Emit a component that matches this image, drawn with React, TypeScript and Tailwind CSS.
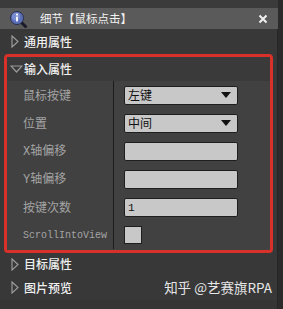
import React from "react"

const cjk = { fontFamily: '"Noto Sans CJK SC", "Noto Sans", sans-serif' }
const mono = { fontFamily: '"Liberation Mono", "Noto Sans CJK SC", monospace' }

function RightTri() {
  return (
    <svg width="8" height="13" viewBox="0 0 8 13" className="shrink-0">
      <polygon points="1,1 7,6.5 1,12" fill="none" stroke="#9a9a9a" strokeWidth="1.2" />
    </svg>
  )
}

function DownTri() {
  return (
    <svg width="13" height="8" viewBox="0 0 13 8" className="shrink-0">
      <polygon points="1,1 12,1 6.5,7" fill="none" stroke="#9a9a9a" strokeWidth="1.2" />
    </svg>
  )
}

function InfoIcon() {
  return (
    <svg width="18" height="18" viewBox="0 0 18 18">
      <line x1="11" y1="11" x2="16.5" y2="16.5" stroke="#1a1a2a" strokeWidth="3" strokeLinecap="round" />
      <circle cx="8" cy="8" r="6.5" fill="#5b6fb8" stroke="#2a3050" strokeWidth="1" />
      <circle cx="7" cy="6.5" r="4" fill="#8fa0e0" opacity="0.6" />
      <circle cx="8" cy="4.6" r="1.1" fill="#fff" />
      <rect x="7.1" y="6.6" width="1.8" height="4.8" fill="#fff" />
    </svg>
  )
}

const rows: { label: string; mono?: boolean; kind: "select" | "text" | "check"; value?: string }[] = [
  { label: "鼠标按键", kind: "select", value: "左键" },
  { label: "位置", kind: "select", value: "中间" },
  { label: "X轴偏移", kind: "text", value: "" },
  { label: "Y轴偏移", kind: "text", value: "" },
  { label: "按键次数", kind: "text", value: "1" },
  { label: "ScrollIntoView", mono: true, kind: "check" },
]

function Label({ text, isMono }: { text: string; isMono?: boolean }) {
  if (isMono) {
    return (
      <span className="text-[10px] text-[#a4a4a4]" style={mono}>
        {text}
      </span>
    )
  }
  // leading latin letter in a mono face, rest CJK
  const first = text[0]
  if (/[A-Z]/.test(first)) {
    return (
      <span className="text-[12px] text-[#a4a4a4]" style={cjk}>
        <span className="text-[12px]" style={mono}>{first}</span>
        {text.slice(1)}
      </span>
    )
  }
  return (
    <span className="text-[12px] text-[#a4a4a4]" style={cjk}>
      {text}
    </span>
  )
}

export default function App() {
  return (
    <div className="w-[283px] h-[309px] overflow-hidden bg-[#2b2b2b] flex flex-col select-none" style={cjk}>
      {/* top strip */}
      <div className="h-[8px] bg-[#3b3b3b] mr-[5px] shrink-0" />

      {/* title bar */}
      <div className="h-[21px] bg-[#5a5a5a] mr-[5px] flex items-center shrink-0">
        <div className="ml-[9px] w-[18px] flex items-center">
          <InfoIcon />
        </div>
        <span className="ml-[13px] text-[11.5px] text-[#f2f2f2] leading-none">细节【鼠标点击】</span>
        <svg width="10" height="10" viewBox="0 0 10 10" className="ml-auto mr-[10px]">
          <path d="M1.5 1.5 L8.5 8.5 M8.5 1.5 L1.5 8.5" stroke="#f0f0f0" strokeWidth="2" />
        </svg>
      </div>

      {/* panel */}
      <div className="flex-1 flex flex-col bg-[#383838] mr-[5px] border-r border-[#262626]">
        <div className="h-[25px] flex items-center pl-[11px] gap-[5px] shrink-0">
          <RightTri />
          <span className="text-[12px] font-medium text-[#f0f0f0]">通用属性</span>
        </div>

        <div className="mx-[4px] border-[3px] border-[#d8312a] rounded-[4px] flex flex-col shrink-0">
          <div className="h-[24px] flex items-center pl-[3px] gap-[1px] bg-[#3a3a3a]">
            <DownTri />
            <span className="text-[12px] font-medium text-[#f0f0f0]">输入属性</span>
          </div>
          <div className="bg-[#414141] flex flex-col pb-[1px]">
            {rows.map((r) => (
              <div key={r.label} className="h-[28px] flex items-stretch">
                <div className="w-[107px] border-r border-[#1c1c1c] flex items-center pl-[16px]">
                  <Label text={r.label} isMono={r.mono} />
                </div>
                <div className="flex items-center pl-[10px]">
                  {r.kind === "check" ? (
                    <div className="w-[18px] h-[18px] bg-[#c8c8c8] border border-[#1e1e1e]" />
                  ) : (
                    <div className="w-[114px] h-[19px] bg-[#c8c8c8] border border-[#1e1e1e] rounded-[2px] flex items-center pl-[3px] pr-[6px]">
                      <span className="text-[12px] text-[#111] leading-none">
                        {r.value === "1" ? <span style={mono} className="text-[11px]">1</span> : r.value}
                      </span>
                      {r.kind === "select" && (
                        <svg width="10" height="6" viewBox="0 0 10 6" className="ml-auto">
                          <polygon points="0,0 10,0 5,6" fill="#111" />
                        </svg>
                      )}
                    </div>
                  )}
                </div>
              </div>
            ))}
          </div>
        </div>

        <div className="h-[22px] flex items-center pl-[11px] gap-[5px] shrink-0">
          <RightTri />
          <span className="text-[12px] font-medium text-[#f0f0f0]">目标属性</span>
        </div>
        <div className="h-[25px] flex items-center pl-[11px] gap-[5px] shrink-0">
          <RightTri />
          <span className="text-[12px] font-medium text-[#f0f0f0]">图片预览</span>
          <span className="ml-auto mr-[5px] text-[13.5px] text-[#e6e6e6]">知乎 @艺赛旗RPA</span>
        </div>
        <div className="flex-1 bg-[#353535]" />
      </div>
    </div>
  )
}
